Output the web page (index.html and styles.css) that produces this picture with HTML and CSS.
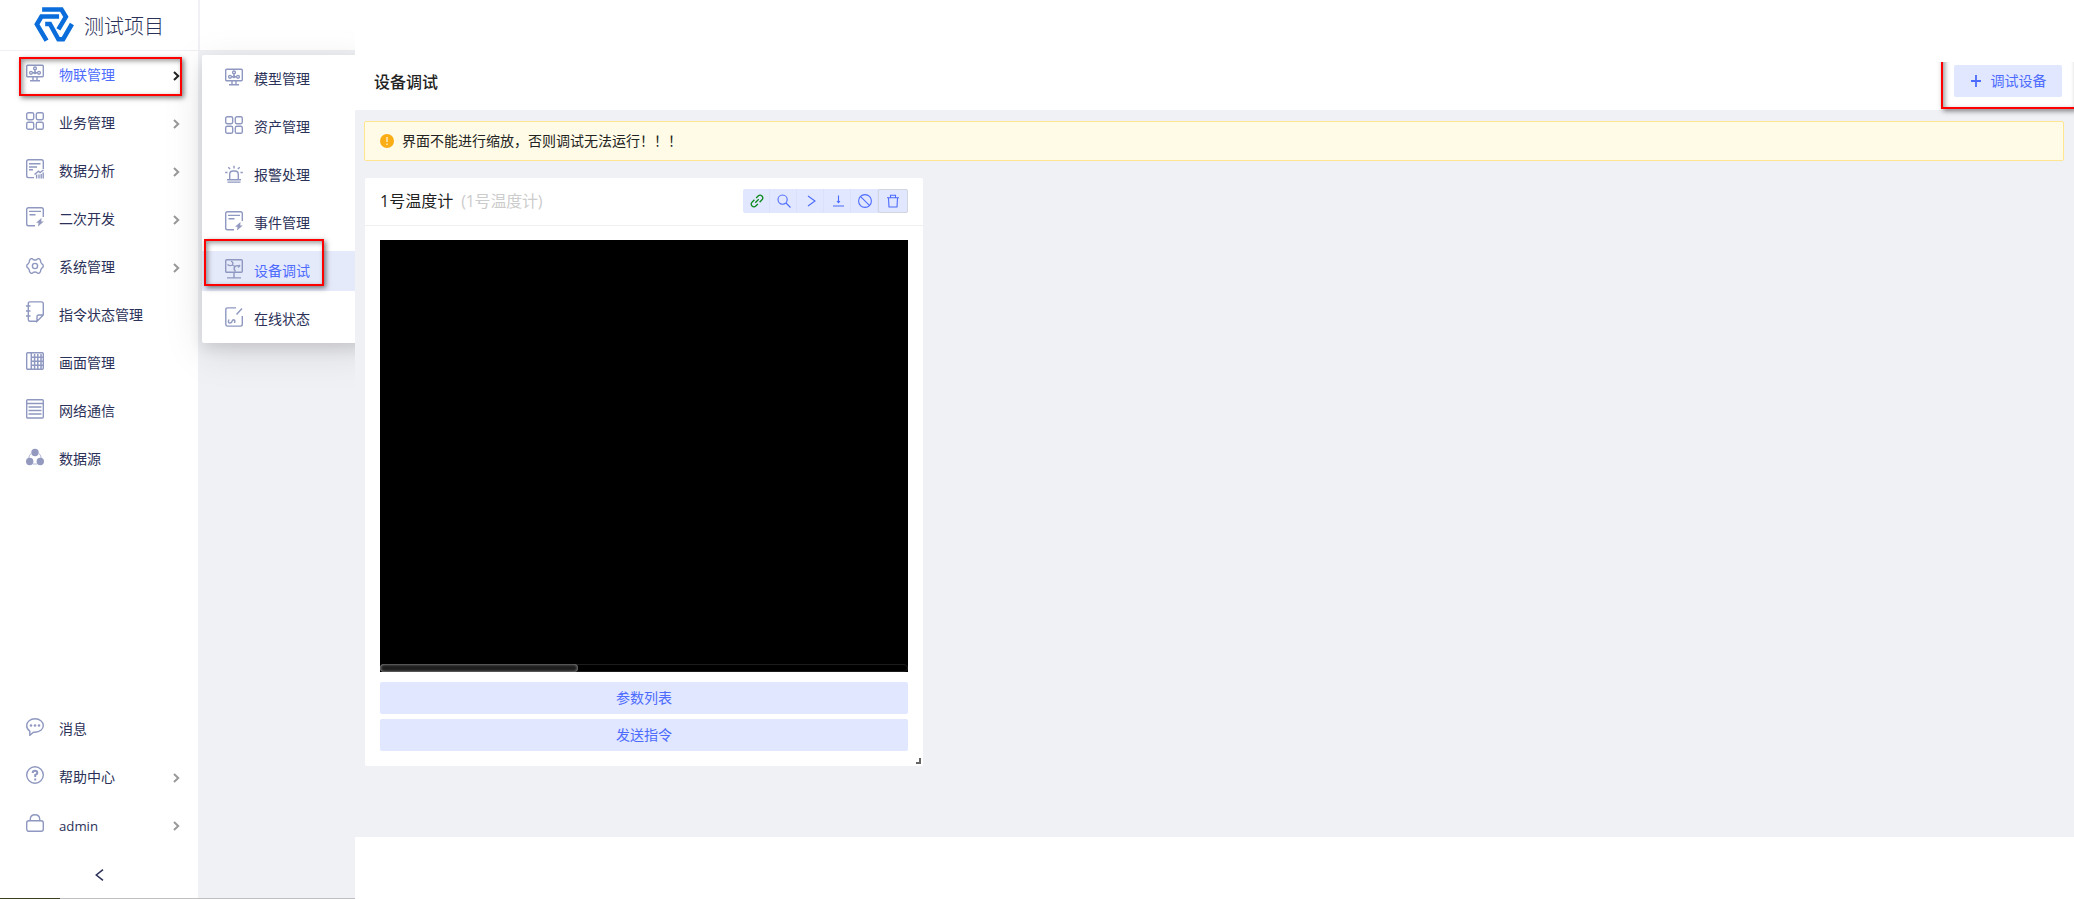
FILE: index.html
```html
<!DOCTYPE html>
<html lang="zh-CN">
<head>
    <meta charset="UTF-8">
    <meta name="viewport" content="width=device-width, initial-scale=1.0">
    <title>设备调试 | 测试项目</title>
    <link rel="stylesheet" href="styles.css">
</head>
<body>

    <!-- shared icons -->
    <svg class="sprite" width="0" height="0">
        <symbol id="i-model" viewBox="0 0 18 18">
            <rect x=".7" y="1.2" width="16.6" height="11.6" rx="1"/>
            <circle cx="9" cy="4.4" r="1.4"/><circle cx="5" cy="8.8" r="1.4"/><circle cx="9" cy="8.8" r=".8"/><circle cx="13" cy="8.8" r="1.4"/>
            <path d="M9 6v2M6.3 8.8h1.7M10 8.8h1.5M7 13v3.5M11 13v3.5M4 16.7h10"/>
        </symbol>
        <symbol id="i-grid" viewBox="0 0 18 18">
            <rect x=".7" y=".7" width="7" height="7" rx="1.6"/><rect x="10.3" y=".7" width="7" height="7" rx="1.6"/>
            <rect x=".7" y="10.3" width="7" height="7" rx="1.6"/><rect x="10.3" y="10.3" width="7" height="7" rx="1.6"/>
        </symbol>
        <symbol id="i-chart" viewBox="0 0 18 20">
            <path d="M17.3 10V2.5Q17.3.7 15.5.7h-13Q.7.7.7 2.5v14.3q0 1.8 1.8 1.8H8M3 4.7h11.5M3 8h8M3 10.8h4M8.5 15.5l4-3.4 1.5 1.4 3.5-2.5"/>
            <path d="M10.6 15.5v4M13 15.5v4M15.2 15v4.5M17.2 13.5v6"/>
        </symbol>
        <symbol id="i-dev" viewBox="0 0 18 20">
            <path d="M17.3 10V2.5Q17.3.7 15.5.7h-13Q.7.7.7 2.5V17q0 1.8 1.8 1.8H9M3 4.4h12M3.500 7.700h6"/>
            <path class="solid" d="M15.500 11l-5.500 4.800h2.500l-.5 3.700 5.800-5h-2.500z"/>
        </symbol>
        <symbol id="i-gear" viewBox="0 0 18 18">
            <path d="M5.200 1.700Q6.500 1.500 7.300 2.600q1.700.9 3.400 0 .8-1.100 2.100-.9 1.200.5 1.700 1.700-.2 1.900 1.100 3.200Q17.300 7.500 17.300 9t-1.700 2.400q-1.300 1.300-1.100 3.200-.5 1.200-1.700 1.700-1.300.2-2.100-.9-1.700-.9-3.400 0-.8 1.100-2.100.9-1.200-.5-1.700-1.700.2-1.900-1.100-3.200Q.7 10.500.7 9t1.700-2.400q1.300-1.300 1.100-3.200.5-1.200 1.700-1.700z"/>
            <circle cx="9" cy="9" r="2.6"/>
        </symbol>
        <symbol id="i-note" viewBox="0 0 18 22">
            <path d="M11 20.300H4Q2.300 20.300 2.300 18.500V2.700Q2.300.9 4 .9h11.500q1.800 0 1.800 1.800V14L11 20.300V15.800Q11 14 12.800 14h4.500M0 5h4.500M0 10h4.500M0 15h4.500"/>
        </symbol>
        <symbol id="i-screen" viewBox="0 0 18 18">
            <rect x=".7" y=".7" width="16.6" height="16.6" rx="1"/>
            <path class="thick" d="M5.300 1v16M5.500 5.300H17M5.500 9.300H17M5.500 13.300H17M8.600 2v15M11.800 2v15M15 2v15"/>
        </symbol>
        <symbol id="i-net" viewBox="0 0 18 20">
            <rect x=".7" y=".7" width="16.6" height="18.3" rx="1"/>
            <path d="M.7 4.500h16.600M2.500 8h13M2.500 11.500h13M2.500 15h13"/>
        </symbol>
        <symbol id="i-source" viewBox="0 0 18 18">
            <g class="solid"><circle cx="9" cy="4.5" r="3.7"/><circle cx="3.7" cy="13.5" r="3.7"/><circle cx="14.3" cy="13.5" r="3.7"/></g>
            <path class="hair" d="M5 5.500Q3 7.500 2.800 10M13 5.500q2 2 2.200 4.500M7 16h4"/>
        </symbol>
        <symbol id="i-alarm" viewBox="0 0 18 18">
            <path d="M4.700 14.500V9.500Q4.700 6 8 6h2q3.300 0 3.300 3.500v5M2 14.700h14M2.500 17.100h13M9 .8v2.700M3.300 2.200l1.800 1.900M14.700 2.200l-1.800 1.900M.2 7.500h2.300M15.500 7.500h2.300"/>
        </symbol>
        <symbol id="i-debug" viewBox="0 0 18 20">
            <rect x=".7" y=".7" width="16.6" height="12.6" rx="1"/>
            <path d="M9 13.500v5M2 18.900h14M6 2.200Q9 3.500 7.300 6 5 7.500 2.500 5.500M7.300 6l2.700 1.500M15 7.500Q12 5.800 10 7.500q-2 2.500.5 5M13 8.500l2-2.500"/>
        </symbol>
        <symbol id="i-online" viewBox="0 0 18 20">
            <path d="M11 .9H2.500Q.8.900.8 2.700v14.600q0 1.800 1.700 1.800h13q1.800 0 1.800-1.800V9M17 1.500l-5.500 6M4 12.500q-1.500 3.500.7 3.500T7 14.200q.5-1.500 2-1.400 1.500.5.5 3.200"/>
        </symbol>
        <symbol id="i-msg" viewBox="0 0 18 18">
            <path d="M9 .7c4.700 0 8.300 3 8.300 6.800S13.700 14.300 9 14.300H7.500L3.800 17.300V13.200C1.800 11.900.7 9.900.7 7.500.7 3.700 4.300.7 9 .7z"/>
            <g class="solid"><circle cx="5" cy="7.5" r="1.3"/><circle cx="9" cy="7.5" r="1.3"/><circle cx="13" cy="7.5" r="1.3"/></g>
        </symbol>
        <symbol id="i-help" viewBox="0 0 18 18">
            <circle cx="9" cy="9" r="8.3"/>
            <path class="bold" d="M6.700 7q0-2.300 2.300-2.300T11.300 7Q11.300 8.300 9.200 9v2M9.200 12.500v2"/>
        </symbol>
        <symbol id="i-lock" viewBox="0 0 18 18">
            <rect x=".7" y="6.7" width="16.6" height="10.6" rx="2.2"/>
            <path d="M4.300 6.500V5Q4.500.8 9 .8T13.700 5v1.500"/>
        </symbol>
        <symbol id="i-arrow" viewBox="0 0 7 10">
            <path d="M1 1l4.200 4L1 9"/>
        </symbol>
    </svg>

    <aside class="sidebar">
        <div class="brand">
            <svg class="logo" viewBox="0 0 118 103">
                <path d="M24 7.500H81L94 29 72 66"/>
                <path d="M74 28H22L8.500 51 37 99"/>
                <path d="M33 50H47L72 95H86L112 50"/>
            </svg>
            <span>测试项目</span>
        </div>
        <ul class="menu">
            <li class="current"><svg class="icon"><use href="#i-model"/></svg>物联管理<svg class="arrow"><use href="#i-arrow"/></svg></li>
            <li><svg class="icon"><use href="#i-grid"/></svg>业务管理<svg class="arrow"><use href="#i-arrow"/></svg></li>
            <li><svg class="icon tall"><use href="#i-chart"/></svg>数据分析<svg class="arrow"><use href="#i-arrow"/></svg></li>
            <li><svg class="icon tall"><use href="#i-dev"/></svg>二次开发<svg class="arrow"><use href="#i-arrow"/></svg></li>
            <li><svg class="icon low"><use href="#i-gear"/></svg>系统管理<svg class="arrow"><use href="#i-arrow"/></svg></li>
            <li><svg class="icon taller"><use href="#i-note"/></svg>指令状态管理</li>
            <li><svg class="icon"><use href="#i-screen"/></svg>画面管理</li>
            <li><svg class="icon tall"><use href="#i-net"/></svg>网络通信</li>
            <li><svg class="icon"><use href="#i-source"/></svg>数据源</li>
        </ul>
        <ul class="menu bottom">
            <li><svg class="icon"><use href="#i-msg"/></svg>消息</li>
            <li><svg class="icon"><use href="#i-help"/></svg>帮助中心<svg class="arrow"><use href="#i-arrow"/></svg></li>
            <li><svg class="icon"><use href="#i-lock"/></svg><span class="user">admin</span><svg class="arrow"><use href="#i-arrow"/></svg></li>
        </ul>
        <div class="collapse">
            <svg width="9" height="12" viewBox="0 0 9 12"><path d="M8 .7L1.300 6 8 11.300"/></svg>
        </div>
    </aside>

    <div class="backdrop">
        <div class="backdrop-top"></div>
    </div>

    <ul class="submenu">
        <li><svg class="icon"><use href="#i-model"/></svg>模型管理</li>
        <li><svg class="icon"><use href="#i-grid"/></svg>资产管理</li>
        <li><svg class="icon low"><use href="#i-alarm"/></svg>报警处理</li>
        <li><svg class="icon tall"><use href="#i-dev"/></svg>事件管理</li>
        <li class="selected"><svg class="icon tall"><use href="#i-debug"/></svg>设备调试</li>
        <li><svg class="icon tall"><use href="#i-online"/></svg>在线状态</li>
    </ul>

    <main class="page">
        <header class="page-header">
            <h1>设备调试</h1>
            <button class="btn add">
                <svg width="10" height="12" viewBox="0 0 10 12"><path d="M5 0v12M0 6h10"/></svg>
                调试设备
            </button>
            <div class="mark mark-add"></div>
        </header>
        <section class="content">
            <div class="alert">
                <svg width="14" height="14" viewBox="0 0 14 14">
                    <circle cx="7" cy="7" r="7" fill="#faad14"/>
                    <path d="M7 3v5M7 9.500v1.500" stroke="#fffbe6" stroke-width="1.2"/>
                </svg>
                界面不能进行缩放，否则调试无法运行！！！
            </div>
            <div class="card">
                <div class="card-head">
                    <div class="card-title">1号温度计<span>(1号温度计)</span></div>
                    <div class="tools">
                        <button class="link"><svg viewBox="0 0 14 14"><g transform="rotate(-45 7 7)"><path d="M6 4.300H3Q0 4.300 0 7t3 2.700h2.500M8 9.700h3q3 0 3-2.700t-3-2.700H8.500M4.500 7h5"/></g></svg></button>
                        <button><svg viewBox="0 0 14 14"><circle cx="5.6" cy="5.6" r="4.6"/><path d="M9 9l4.500 4.500"/></svg></button>
                        <button><svg viewBox="0 0 14 14"><path d="M4 2l7 5-7 5"/></svg></button>
                        <button><svg viewBox="0 0 14 14"><path d="M7.500 1.500v7M6 7l1.500 1.700L9 7M2 12h11"/></svg></button>
                        <button><svg viewBox="0 0 14 14"><circle cx="7" cy="7" r="6.4"/><path d="M2.600 2.600l8.800 8.800"/></svg></button>
                        <button class="trash"><svg viewBox="0 0 14 14"><path d="M1 3.700h12M4.500 3.500V1.200h5v2.300M2.500 4l.5 9h8l.5-9"/></svg></button>
                    </div>
                </div>
                <div class="card-body">
                    <div class="console">
                        <div class="track"><div class="thumb"></div></div>
                    </div>
                    <button class="btn block">参数列表</button>
                    <button class="btn block">发送指令</button>
                </div>
                <span class="resize"></span>
            </div>
        </section>
    </main>

    <div class="mark mark-menu"></div>
    <div class="mark mark-submenu"></div>
    <div class="status-line"></div>

</body>
</html>
```
FILE: styles.css
```css
* {
    box-sizing: border-box;
}
body {
    margin: 0;
    height: 899px;
    display: flex;
    position: relative;
    overflow: hidden;
    background: #fff;
    color: #2b3158;
    font-family: "Open Sans", "Noto Sans CJK SC", sans-serif;
    font-size: 14px;
}
ul {
    list-style: none;
    margin: 0;
    padding: 0;
}
svg {
    fill: none;
    flex: none;
}
button {
    font-family: inherit;
    font-size: 14px;
    border: none;
    padding: 0;
}
.sprite {
    position: absolute;
}

/* sidebar */
.sidebar {
    width: 198px;
    height: 899px;
    display: flex;
    flex-direction: column;
    background: #fff;
}
.brand {
    height: 51px;
    padding: 0 0 0 34px;
    display: flex;
    align-items: center;
    border-bottom: 1px solid #efeff4;
    font-size: 20px;
    font-weight: 300;
}
.brand span {
    line-height: 30px;
    margin-left: 10px;
    padding-top: 4px;
}
.logo {
    width: 40px;
    height: 35px;
    margin-bottom: 2px;
    stroke: #0a6ddb;
    stroke-width: 13.5;
}
.menu li {
    height: 48px;
    padding: 0 18px 0 26px;
    display: flex;
    align-items: center;
    line-height: 20px;
}
.icon {
    width: 18px;
    height: 18px;
    margin: 0 15px 4px 0;
    stroke: #8f98c0;
    stroke-width: 1.4;
}
.icon.tall {
    height: 20px;
    margin-bottom: 5px;
}
.icon.taller {
    height: 22px;
    margin-bottom: 6px;
}
.icon.low {
    margin-bottom: 2px;
}
.solid {
    fill: #949abf;
    stroke: none;
}
.thick {
    stroke-width: 1.5;
}
.hair {
    stroke-width: .7;
}
.bold {
    stroke-width: 2;
}
.arrow {
    width: 7px;
    height: 10px;
    margin: 2px 0 0 auto;
    stroke: #999;
    stroke-width: 2;
}
.user {
    font-size: 13.2px;
    padding-top: 1px;
}
.current {
    color: #4d6bfe;
}
.current .arrow {
    stroke: #222;
}
.bottom {
    margin-top: auto;
}
.collapse {
    height: 50px;
    padding-top: 2px;
    display: flex;
    align-items: center;
    justify-content: center;
    stroke: #2b3158;
    stroke-width: 1.5;
}

/* strip behind the flyout */
.backdrop {
    width: 157px;
    background: #f0f1f5;
}
.backdrop-top {
    height: 51px;
    background: #fff;
    border-left: 2px solid #f0f0f5;
    border-bottom: 1px solid #efeff4;
}
.submenu {
    position: absolute;
    left: 202px;
    top: 55px;
    width: 170px;
    height: 288px;
    padding: 4px 0;
    display: flex;
    flex-direction: column;
    gap: 8px;
    background: #fff;
    border-radius: 2px;
    box-shadow: 0 6px 14px rgba(0, 0, 0, .1), 0 10px 40px rgba(0, 0, 0, .1);
}
.submenu li {
    height: 40px;
    padding-left: 23px;
    display: flex;
    align-items: center;
    line-height: 20px;
}
.submenu .icon {
    margin-right: 11px;
}
.submenu .selected {
    background: #e5eafb;
    color: #4d6bfe;
}

/* page */
.page {
    flex: 1;
    position: relative;
    background: #fff;
    color: #222;
}
.page-header {
    position: relative;
    height: 110px;
    padding: 52px 12px 0 19px;
    display: flex;
    align-items: center;
    justify-content: space-between;
}
.page-header h1 {
    margin: 0;
    font-size: 16px;
    font-weight: 500;
    line-height: 24px;
    padding-top: 1px;
}
.btn {
    height: 32px;
    padding-bottom: 2px;
    background: #e0e7ff;
    color: #4d6bfe;
    border-radius: 2px;
}
.add {
    width: 108px;
    display: flex;
    align-items: center;
    justify-content: center;
    gap: 10px;
    padding-left: 1px;
}
.add svg {
    margin-top: 2px;
    stroke: #4d6bfe;
    stroke-width: 1.8;
}
.content {
    height: 727px;
    padding: 11px 10px 0 9px;
    background: #f0f1f5;
}
.alert {
    height: 40px;
    padding: 0 0 2px 15px;
    display: flex;
    align-items: center;
    gap: 8px;
    background: #fffbe6;
    border: 1px solid #ffe58f;
    border-radius: 2px;
}
.alert svg {
    margin-top: 1px;
}
.card {
    position: relative;
    width: 558px;
    height: 588px;
    margin: 17px 0 0 1px;
    background: #fff;
    border-radius: 2px;
}
.card-head {
    height: 48px;
    padding: 0 15px 2px;
    display: flex;
    align-items: center;
    justify-content: space-between;
    border-bottom: 1px solid #f0f0f0;
}
.card-title {
    font-size: 16px;
    line-height: 24px;
}
.card-title span {
    margin-left: 8px;
    color: #ccc;
    letter-spacing: -.2px;
}
.tools {
    display: flex;
    height: 24px;
    background: #e0e7ff;
    border-radius: 2px;
}
.tools button {
    width: 27px;
    padding-left: 2px;
    display: flex;
    align-items: center;
    justify-content: center;
    background: none;
    border-right: 1px solid #dbe1fb;
}
.tools svg {
    width: 14px;
    height: 14px;
    stroke: #4d6bfe;
    stroke-width: 1.1;
}
.tools .link svg {
    stroke: #0a8a1a;
    stroke-width: 1.3;
}
.tools .trash {
    width: 30px;
    padding: 0;
    border: 1px solid #d3d5df;
    border-radius: 2px;
}
.card-body {
    padding: 14px 15px;
}
.console {
    height: 432px;
    margin-bottom: 10px;
    display: flex;
    align-items: flex-end;
    background: #000;
}
.track {
    width: 100%;
    height: 8px;
    border: 1px solid #1d1d1d;
    border-radius: 4px;
}
.thumb {
    width: 198px;
    height: 8px;
    margin: -1px;
    background: #1e1e1e;
    border-radius: 4px;
    box-shadow: inset 0 0 3px #bbb;
}
.block {
    display: block;
    width: 100%;
    margin-bottom: 5px;
}
.resize {
    position: absolute;
    right: 2px;
    bottom: 2px;
    width: 5px;
    height: 6px;
    border-right: 2px solid #666;
    border-bottom: 2px solid #666;
}

/* red highlight frames */
.mark {
    position: absolute;
    border: 2px solid #f00;
    box-shadow: 2px 2px 5px rgba(0, 0, 0, .5), inset 2px 2px 5px rgba(0, 0, 0, .4);
}
.mark-menu {
    left: 19px;
    top: 57px;
    width: 163px;
    height: 39px;
}
.mark-submenu {
    left: 204px;
    top: 239px;
    width: 120px;
    height: 47px;
}
.mark-add {
    right: -2px;
    top: 52px;
    width: 135px;
    height: 57px;
    clip-path: inset(10px 0 -10px -10px);
}
.status-line {
    position: absolute;
    left: 0;
    bottom: 0;
    width: 355px;
    height: 1px;
    background: #bfbfbf;
    border-left: 60px solid #3c4020;
}
```
